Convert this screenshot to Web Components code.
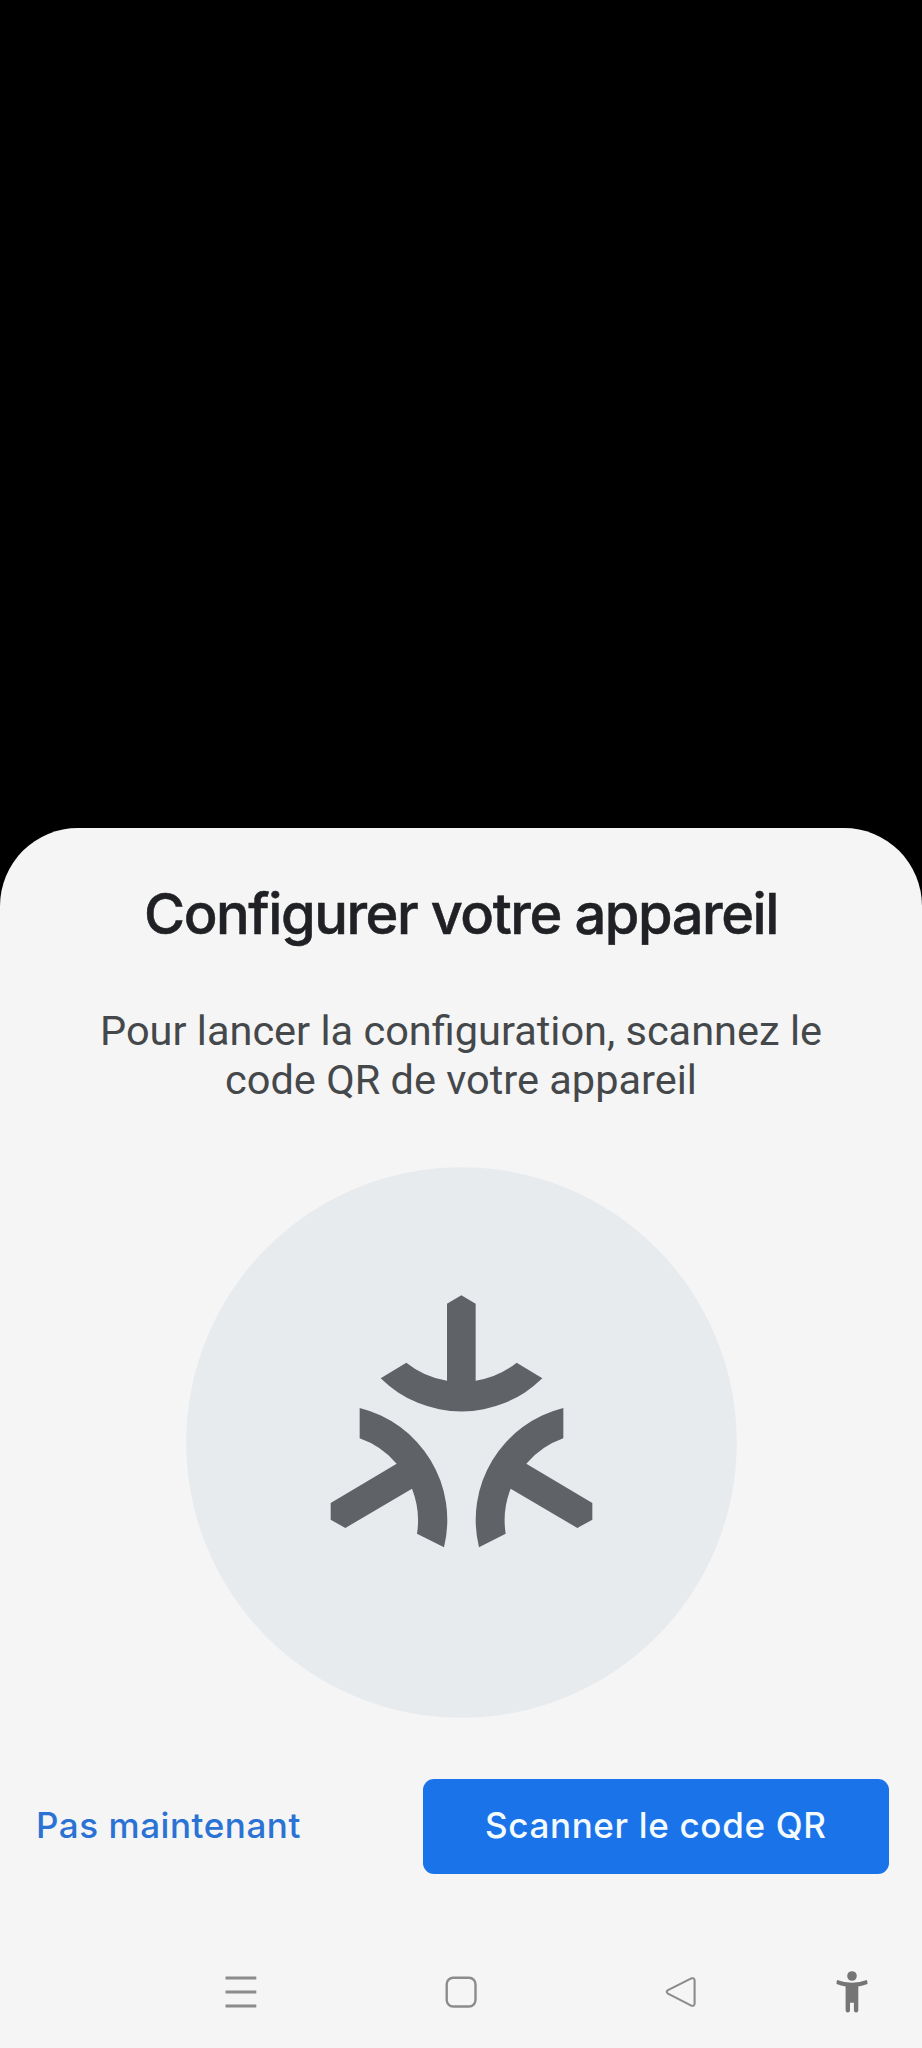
<!DOCTYPE html>
<html lang="fr">
<head>
<meta charset="UTF-8">
<meta name="viewport" content="width=device-width, initial-scale=1">
<title>Configurer votre appareil</title>
<style>
    html, body {
        margin: 0;
        background: #000;
    }
</style>
</head>
<body>
<setup-screen>
    <setup-sheet>
        <span slot="title">Configurer votre appareil</span>
        <span slot="text">Pour lancer la configuration, scannez le<br>code QR de votre appareil</span>
        <matter-logo slot="picture"></matter-logo>
        <sheet-button slot="actions" variant="text">Pas maintenant</sheet-button>
        <sheet-button slot="actions" variant="filled">Scanner le code QR</sheet-button>
    </setup-sheet>
    <system-nav></system-nav>
</setup-screen>

<script>
class SetupScreen extends HTMLElement {
    constructor() {
        super();
        this.attachShadow({ mode: 'open' });
        this.shadowRoot.innerHTML = `
        <style>
            :host {
                display: flex;
                flex-direction: column;
                box-sizing: border-box;
                width: 922px;
                height: 2048px;
                padding-top: 827.5px;
                background: #000;
            }
            main {
                flex: 1;
                display: flex;
                flex-direction: column;
                justify-content: space-between;
                background: #f5f5f5;
                border-radius: 78px 78px 0 0;
            }
        </style>
        <main><slot></slot></main>
        `;
    }
}

class SetupSheet extends HTMLElement {
    constructor() {
        super();
        this.attachShadow({ mode: 'open' });
        this.shadowRoot.innerHTML = `
        <style>
            :host {
                display: flex;
                flex-direction: column;
                align-items: center;
                padding-top: 50.5px;
            }
            h1 {
                margin: 0;
                font: 550 56px/72px Inter, sans-serif;
                letter-spacing: -1.45px;
                color: #202124;
                -webkit-text-stroke: 0.5px #202124;
                white-space: nowrap;
            }
            p {
                margin: 56px 0 0;
                font: 400 41.5px/49px Roboto, sans-serif;
                color: #45484b;
                text-align: center;
                white-space: nowrap;
            }
            .picture {
                margin-top: 63px;
            }
            .actions {
                display: flex;
                justify-content: space-between;
                align-items: center;
                align-self: stretch;
                margin-top: 61px;
                padding: 0 33.5px 0 36px;
            }
        </style>
        <h1><slot name="title"></slot></h1>
        <p><slot name="text"></slot></p>
        <div class="picture"><slot name="picture"></slot></div>
        <div class="actions"><slot name="actions"></slot></div>
        `;
    }
}

class MatterLogo extends HTMLElement {
    constructor() {
        super();
        this.attachShadow({ mode: 'open' });
        this.shadowRoot.innerHTML = `
        <style>
            :host {
                display: block;
                width: 551px;
                height: 551px;
            }
            svg {
                display: block;
                width: 100%;
                height: 100%;
            }
        </style>
        <svg viewBox="-372 -309 1653 1653">
            <circle cx="454.5" cy="517.5" r="826" fill="#e8ebee"/>
            <g fill="#5f6368">
                <path d="M454 76L497 101V332A259 259 0 0 0 620 278L697 325A346 346 0 0 1 212 325L289 278A259 259 0 0 0 411 332V101Z"/>
                <path d="M149 414A346 346 0 0 1 402 832L321 791A259 259 0 0 0 306 656L106 774L62 749V699L260 581A259 259 0 0 0 149 505Z"/>
                <path d="M760 414A346 346 0 0 0 507 832L587 791A259 259 0 0 1 602 656L802 774L847 749V699L649 581A259 259 0 0 1 760 505Z"/>
            </g>
        </svg>
        `;
    }
}

class SheetButton extends HTMLElement {
    static get observedAttributes() {
        return ['variant'];
    }

    constructor() {
        super();
        this.attachShadow({ mode: 'open' });
    }

    attributeChangedCallback() {
        this.render();
    }

    connectedCallback() {
        this.render();
    }

    render() {
        const variant = this.getAttribute('variant') || 'text';
        this.shadowRoot.innerHTML = `
        <style>
            :host {
                display: block;
            }
            button {
                display: block;
                height: 95px;
                margin: 0;
                padding: 0 0 2px;
                border: 0;
                border-radius: 11px;
                font: 500 35px/93px Inter, sans-serif;
                white-space: nowrap;
            }
            .text {
                background: none;
                color: #2a72d4;
                letter-spacing: 0.55px;
            }
            .filled {
                width: 465.5px;
                background: #1a73e8;
                color: #f4fbff;
                letter-spacing: 0.66px;
            }
        </style>
        <button class="${variant}"><slot></slot></button>
        `;
    }
}

class SystemNav extends HTMLElement {
    constructor() {
        super();
        this.attachShadow({ mode: 'open' });
        this.shadowRoot.innerHTML = `
        <style>
            :host {
                display: grid;
                grid-template-columns: 220px 220px 220px 1fr;
                place-items: center;
                height: 113px;
                padding: 0 9px 0 131px;
            }
            svg {
                display: block;
                width: 44px;
                height: 44px;
                fill: none;
                stroke: #8c8c8c;
                stroke-width: 2.4;
            }
            .person {
                fill: #757575;
                stroke: none;
            }
        </style>
        <svg viewBox="0 0 44 44"><path d="M6.5 8H37.3M6.5 22H37.3M6.5 36H37.3" stroke-width="2.8"/></svg>
        <svg viewBox="0 0 44 44"><rect x="7.7" y="7.7" width="28.8" height="28.8" rx="6.5"/></svg>
        <svg viewBox="0 0 44 44"><path d="M31.8 8.6L9 20.1Q6.4 21.8 9 23.6L31.8 35.4Q35.6 36.8 35.6 33.2V10.8Q35.6 7.2 31.8 8.6Z" stroke-width="2.1"/></svg>
        <svg class="person" viewBox="0 0 44 44">
            <circle cx="22" cy="6" r="4.8"/>
            <path d="M7.2 10.1Q14 12.8 22 12.8T36.8 10.1Q37.8 12 37.4 14Q33 15.9 28.3 16.6V40.3Q28.3 42.5 26.1 42.5T23.9 40.3V32.8H20V40.3Q20 42.5 17.8 42.5T15.6 40.3V16.6Q11 15.9 6.6 14Q6.2 12 7.2 10.1Z"/>
        </svg>
        `;
    }
}

customElements.define('setup-screen', SetupScreen);
customElements.define('setup-sheet', SetupSheet);
customElements.define('matter-logo', MatterLogo);
customElements.define('sheet-button', SheetButton);
customElements.define('system-nav', SystemNav);
</script>
</body>
</html>
